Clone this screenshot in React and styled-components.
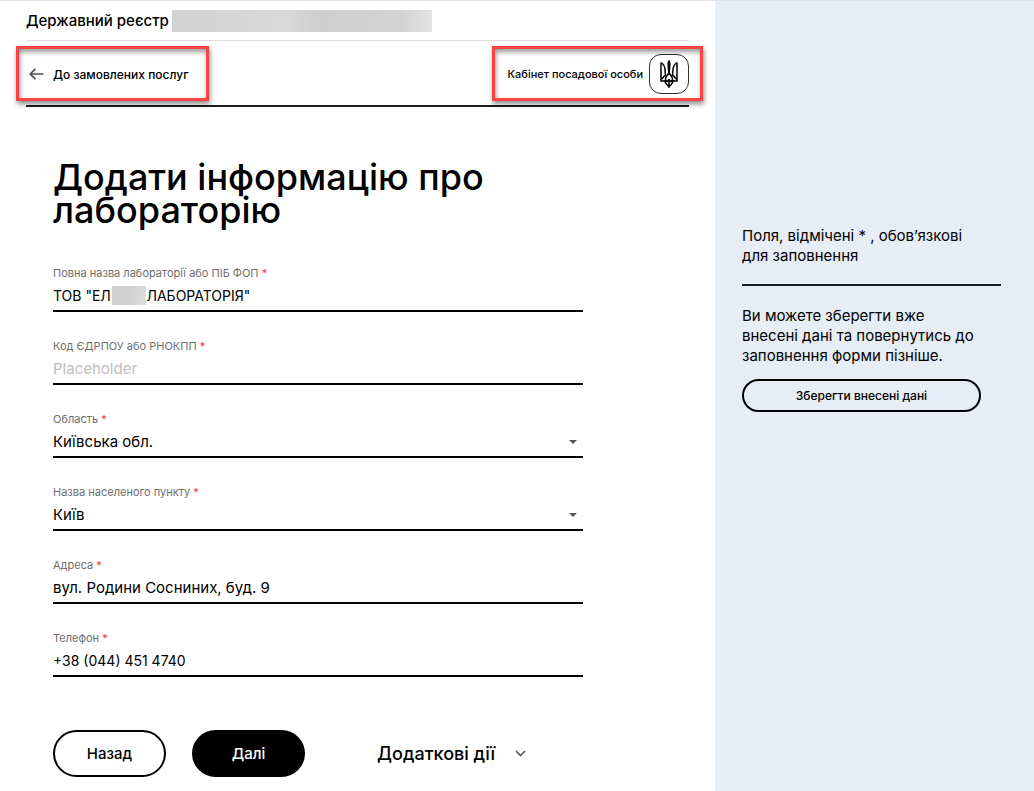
import React from "react";
import styled, { createGlobalStyle } from "styled-components";

const GlobalStyle = createGlobalStyle`
  *, *::before, *::after { box-sizing: border-box; }
  body { margin: 0; background: #fff; color: #000; font-family: Inter, "Noto Sans", sans-serif; }
  button, input, select { font: inherit; color: inherit; }
`;

const Page = styled.div`
  display: grid;
  grid-template-columns: minmax(0, 1fr) 319px;
  min-height: 100vh;
  border-top: 1px solid #e4e4e4;
`;

const Main = styled.main`
  padding: 0 26px 14px;
`;

const Registry = styled.div`
  display: flex;
  align-items: center;
  gap: 3px;
  height: 40px;
  border-bottom: 1px solid #dcdcdc;
  font-size: 15px;
  font-weight: 500;
`;

const Redacted = styled.span`
  width: 260px;
  height: 22px;
  background: linear-gradient(90deg, #d2d2d2, #d9d9d9 44%, #cfcfcf 56%, #d3d3d3 88%, #e3e3e3);
`;

const Nav = styled.nav`
  display: flex;
  align-items: center;
  justify-content: space-between;
  padding: 13px 0 11px;
  border-bottom: 2px solid #1d1d1f;
`;

const Highlight = styled.div`
  position: relative;
  display: flex;
  align-items: center;
  height: 40px;

  &::after {
    content: "";
    position: absolute;
    inset: -8px ${(p) => p.$right}px -7px ${(p) => p.$left}px;
    border: 3px solid #fd4444;
    box-shadow: 1px 3px 5px rgba(0, 0, 0, 0.45), inset 1px 3px 5px rgba(0, 0, 0, 0.4);
    pointer-events: none;
  }
`;

const BackLink = styled.a`
  display: flex;
  align-items: center;
  gap: 9px;
  padding-left: 3px;
  color: #000;
  font-size: 12px;
  font-weight: 500;
  text-decoration: none;
`;

const Cabinet = styled.a`
  display: flex;
  align-items: center;
  gap: 6px;
  color: #000;
  font-size: 11px;
  font-weight: 500;
  text-decoration: none;
`;

const Emblem = styled.span`
  display: grid;
  place-items: center;
  width: 40px;
  height: 40px;
  border: 1px solid #333;
  border-radius: 12px;
`;

const Form = styled.form`
  display: flex;
  flex-direction: column;
  gap: 26px;
  max-width: 584px;
  padding: 54px 27px 0;
`;

const Title = styled.h1`
  margin: 0 0 12px;
  font-size: 36px;
  font-weight: 500;
  line-height: 33px;
`;

const Field = styled.div`
  position: relative;
  display: flex;
  flex-direction: column;
  border-bottom: 2px solid #000;
`;

const Label = styled.label`
  color: #6e6e6e;
  font-size: 11px;
  line-height: 16px;
`;

const Star = styled.span`
  color: #f5333f;
`;

const Input = styled.input`
  width: 100%;
  height: 29px;
  padding: 0;
  border: 0;
  outline: 0;
  background: none;
  font-size: ${(p) => (p.$compact ? 14 : 15)}px;
  &::placeholder { color: #bdbdbd; opacity: 1; }
`;

const Select = styled.select`
  width: 100%;
  height: 29px;
  padding: 0;
  border: 0;
  outline: 0;
  appearance: none;
  background: none;
  font-size: 15px;
`;

const Caret = styled.span`
  position: absolute;
  right: 6px;
  bottom: 12px;
  border: 4px solid transparent;
  border-top-color: #555;
  border-bottom: 0;
  pointer-events: none;
`;

const FieldMask = styled.span`
  position: absolute;
  left: 59px;
  bottom: 5px;
  width: 34px;
  height: 19px;
  background: linear-gradient(100deg, #d0d0d0 50%, #dedede);
`;

const Actions = styled.div`
  display: flex;
  align-items: center;
  gap: 26px;
  margin-top: 27px;
`;

const Pill = styled.button`
  width: ${(p) => (p.$small ? 239 : 113)}px;
  height: ${(p) => (p.$small ? 33 : 47)}px;
  padding: 0;
  border: 2px solid #000;
  border-radius: 24px;
  background: ${(p) => (p.$solid ? "#000" : "transparent")};
  color: ${(p) => (p.$solid ? "#fff" : "#000")};
  font-size: ${(p) => (p.$small ? 12 : 15)}px;
  font-weight: 500;
`;

const MoreButton = styled.button`
  display: flex;
  align-items: center;
  gap: 20px;
  margin-left: 46px;
  padding: 0;
  border: 0;
  background: none;
  font-size: 18px;
  font-weight: 500;
  white-space: nowrap;
`;

const Aside = styled.aside`
  padding: 225px 33px 0 27px;
  background: #e6edf4;
`;

const Note = styled.p`
  max-width: 240px;
  margin: 0;
  font-size: 15px;
  line-height: 20px;
`;

const Rule = styled.hr`
  margin: 18px 0 20px;
  border: 0;
  border-top: 2px solid #1d1d1f;
`;

const SaveRow = styled.div`
  display: flex;
  margin-top: 13px;
`;

const ArrowIcon = () => (
  <svg width="15" height="12" viewBox="0 0 15 12" fill="none" stroke="#4d4d4d" strokeWidth="1.7" aria-hidden="true">
    <path d="M14.5 6H1.4M6.4 .8 1.2 6l5.2 5.2" />
  </svg>
);

const ChevronIcon = () => (
  <svg width="11" height="7" viewBox="0 0 11 7" fill="none" stroke="#555" strokeWidth="1.6" aria-hidden="true">
    <path d="M1 1l4.5 4.5L10 1" />
  </svg>
);

const TridentIcon = () => (
  <svg width="18" height="28" viewBox="0 0 36 56" fill="none" stroke="#000" strokeWidth="3" aria-hidden="true">
    <path d="M18 2c-2 3-2 6-1.500 10L18 30l1.500-18C20 8 20 5 18 2z" />
    <path d="M17 26c-1 5-6 7-6 12 0 3 2 5 4 5s3-2 3-5c0 3 1 5 3 5s4-2 4-5c0-5-5-7-6-12" />
    <path d="M2 5v37h8M2 5c6 4 8 9 8 15l1 11c-3 1-5 3-6 6H2" />
    <path d="M34 5v37h-8M34 5c-6 4-8 9-8 15l-1 11c3 1 5 3 6 6h3" />
    <path d="M10 42c0 5 4 6 8 12 4-6 8-7 8-12zM18 38v14" />
  </svg>
);

const fields = [
  { id: "name", label: "Повна назва лабораторії або ПІБ ФОП", value: "ТОВ \"ЕЛ\u2003\u2003\u2009\u2009\u2009ЛАБОРАТОРІЯ\"", masked: true, compact: true },
  { id: "code", label: "Код ЄДРПОУ або РНОКПП", placeholder: "Placeholder" },
  { id: "region", label: "Область", value: "Київська обл.", select: true },
  { id: "city", label: "Назва населеного пункту", value: "Київ", select: true },
  { id: "address", label: "Адреса", value: "вул. Родини Сосниних, буд. 9" },
  { id: "phone", label: "Телефон", value: "+38 (044) 451 4740", compact: true },
];

export default function App() {
  return (
    <>
      <GlobalStyle />
      <Page>
        <Main>
          <Registry>
            Державний реєстр <Redacted />
          </Registry>
          <Nav>
            <Highlight $left={-10} $right={-20}>
              <BackLink href="#services">
                <ArrowIcon />
                До замовлених послуг
              </BackLink>
            </Highlight>
            <Highlight $left={-16} $right={-14}>
              <Cabinet href="#cabinet">
                Кабінет посадової особи
                <Emblem>
                  <TridentIcon />
                </Emblem>
              </Cabinet>
            </Highlight>
          </Nav>
          <Form onSubmit={(e) => e.preventDefault()}>
            <Title>Додати інформацію про лабораторію</Title>
            {fields.map((f) => (
              <Field key={f.id}>
                <Label htmlFor={f.id}>
                  {f.label} <Star>*</Star>
                </Label>
                {f.select ? (
                  <Select id={f.id} defaultValue={f.value}>
                    <option>{f.value}</option>
                  </Select>
                ) : (
                  <Input id={f.id} defaultValue={f.value} placeholder={f.placeholder} $compact={f.compact} />
                )}
                {f.select && <Caret />}
                {f.masked && <FieldMask />}
              </Field>
            ))}
            <Actions>
              <Pill type="button">Назад</Pill>
              <Pill type="submit" $solid>Далі</Pill>
              <MoreButton type="button">
                Додаткові дії
                <ChevronIcon />
              </MoreButton>
            </Actions>
          </Form>
        </Main>
        <Aside>
          <Note>Поля, відмічені * , обов’язкові для заповнення</Note>
          <Rule />
          <Note>Ви можете зберегти вже внесені дані та повернутись до заповнення форми пізніше.</Note>
          <SaveRow>
            <Pill type="button" $small>Зберегти внесені дані</Pill>
          </SaveRow>
        </Aside>
      </Page>
    </>
  );
}
